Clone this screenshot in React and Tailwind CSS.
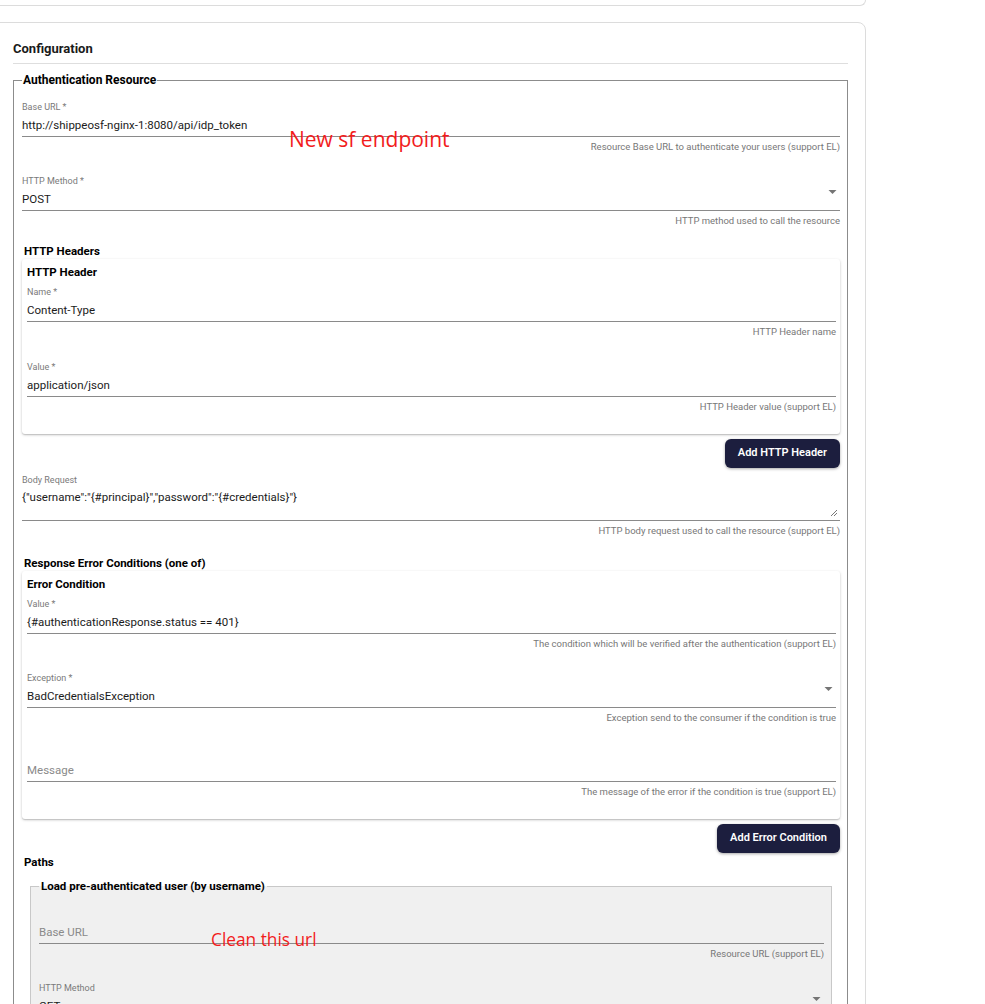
import React from 'react';

function Caret() {
  return (
    <svg className="absolute right-[3px] top-[3px]" width="9" height="5" viewBox="0 0 9 5">
      <path d="M0.5 0 L8.5 0 L4.5 4 Z" fill="#757575" />
    </svg>
  );
}

function Field({ label, value, placeholder, helper, select, textarea, className = '' }) {
  return (
    <div className={className}>
      <div className="h-[11px] text-[9px] leading-[10px] text-[#7a7a7a]">{label}</div>
      <div
        className={`relative border-b border-[#8a8a8a] text-[11.5px] ${
          textarea ? 'h-[35px] pt-[5px] leading-[12px]' : 'h-[24px] leading-[24px]'
        } ${value ? 'text-[#1b1b1b]' : 'text-[#8a8a8a]'}`}
      >
        {value || placeholder}
        {select && <Caret />}
        {textarea && (
          <svg className="absolute right-[2px] bottom-[3px]" width="8" height="8" viewBox="0 0 8 8">
            <path d="M1 7 L7 1 M4 7 L7 4" stroke="#777" strokeWidth="1" />
          </svg>
        )}
      </div>
      <div className="mt-[4px] h-[12px] text-[9.5px] leading-[12px] text-right text-[#777]">{helper}</div>
    </div>
  );
}

function SubCard({ title, children }) {
  return (
    <div className="mt-[1px] bg-white rounded-[3px] pl-[5px] pr-[4px] pt-[6px] pb-[21px] shadow-[0_1px_3px_rgba(0,0,0,0.2),0_1px_1px_rgba(0,0,0,0.12)]">
      <div className="text-[11.5px] leading-[14px] font-bold text-black">{title}</div>
      {children}
    </div>
  );
}

function DarkButton({ children }) {
  return (
    <div className="mt-[5px] flex justify-end">
      <button className="h-[29px] px-[13px] rounded-[6px] bg-[#1c1e3e] text-white text-[11px] font-semibold shadow-[0_1px_3px_rgba(0,0,0,0.35)]">
        {children}
      </button>
    </div>
  );
}

export default function App() {
  return (
    <div className="relative w-[985px] min-h-screen overflow-hidden bg-white font-['Roboto','Liberation_Sans',sans-serif]">
      <div className="ml-[-8px] w-[874px] h-[6px] border-x border-b border-[#dcdcdc] rounded-b-lg" />

      <div className="mt-[16px] ml-[-8px] w-[874px] border border-[#dcdcdc] rounded-lg pl-[20px] pr-[17px] pt-[18px] pb-[20px]">
        <div className="text-[13px] leading-[16px] font-bold text-[#1a1a1a]">Configuration</div>
        <div className="mt-[6px] border-b border-[#dedede]" />

        <fieldset className="mt-[9px] border border-[#8c8c8c] pl-[8px] pr-[7px] pb-[24px]">
          <legend className="px-[1px] text-[12px] leading-[14px] font-bold text-black">Authentication Resource</legend>

          <Field
            className="mt-[15px]"
            label="Base URL *"
            value="http://shippeosf-nginx-1:8080/api/idp_token"
            helper="Resource Base URL to authenticate your users (support EL)"
          />
          <Field
            className="mt-[23px]"
            label="HTTP Method *"
            value="POST"
            helper="HTTP method used to call the resource"
            select
          />

          <div className="mt-[17px] ml-[2px] text-[11.5px] leading-[14px] font-bold text-black">HTTP Headers</div>
          <SubCard title="HTTP Header">
            <Field className="mt-[8px]" label="Name *" value="Content-Type" helper="HTTP Header name" />
            <Field className="mt-[24px]" label="Value *" value="application/json" helper="HTTP Header value (support EL)" />
          </SubCard>
          <DarkButton>Add HTTP Header</DarkButton>

          <Field
            className="mt-[7px]"
            label="Body Request"
            value={'{"username":"{#principal}","password":"{#credentials}"}'}
            helper="HTTP body request used to call the resource (support EL)"
            textarea
          />

          <div className="mt-[19px] ml-[2px] text-[11.5px] leading-[14px] font-bold text-black">Response Error Conditions (one of)</div>
          <SubCard title="Error Condition">
            <Field
              className="mt-[8px]"
              label="Value *"
              value="{#authenticationResponse.status == 401}"
              helper="The condition which will be verified after the authentication (support EL)"
            />
            <Field
              className="mt-[23px]"
              label="Exception *"
              value="BadCredentialsException"
              helper="Exception send to the consumer if the condition is true"
              select
            />
            <Field
              className="mt-[23px]"
              label=""
              placeholder="Message"
              helper="The message of the error if the condition is true (support EL)"
            />
          </SubCard>
          <DarkButton>Add Error Condition</DarkButton>

          <div className="mt-[2px] ml-[2px] text-[11.5px] leading-[14px] font-bold text-black">Paths</div>

          <fieldset className="mt-[10px] mx-[8px] bg-[#f0f0f0] border border-[#c8c8c8] pl-[8px] pr-[7px] pb-[20px]">
            <legend className="px-[2px] text-[11.5px] leading-[14px] font-bold text-black">Load pre-authenticated user (by username)</legend>
            <Field className="mt-[16px]" label="" placeholder="Base URL" helper="Resource URL (support EL)" />
            <Field className="mt-[23px]" label="HTTP Method" value="GET" helper="HTTP method used to call the resource" select />
          </fieldset>
        </fieldset>
      </div>

      <div className="absolute left-[289px] top-[127px] text-[21px] leading-[24px] text-[#f21c1c] font-['Open_Sans',sans-serif]">
        New sf endpoint
      </div>
      <div className="absolute left-[211px] top-[930px] text-[17.3px] leading-[20px] text-[#f21c1c] font-['Open_Sans',sans-serif]">
        Clean this url
      </div>
    </div>
  );
}
